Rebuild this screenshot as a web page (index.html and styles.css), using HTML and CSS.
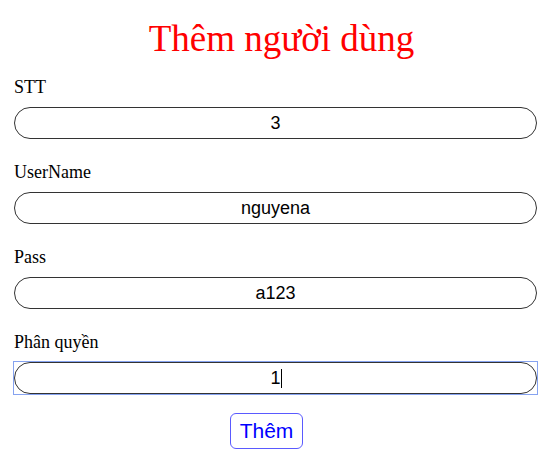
FILE: index.html
```html
<!DOCTYPE html>
<html lang="vi">
<head>
<meta charset="utf-8">
<title>Thêm người dùng</title>
<link rel="stylesheet" href="styles.css">
</head>
<body>
<div class="page">
  <h1 class="title">Thêm người dùng</h1>
  <form class="form">
    <div class="field">
      <label class="label" for="stt">STT</label>
      <input class="input" id="stt" type="text" value="3">
    </div>
    <div class="field">
      <label class="label" for="user">UserName</label>
      <input class="input" id="user" type="text" value="nguyena">
    </div>
    <div class="field">
      <label class="label" for="pass">Pass</label>
      <input class="input" id="pass" type="text" value="a123">
    </div>
    <div class="field field-last">
      <label class="label" for="role">Phân quyền</label>
      <div class="input-wrap">
        <input class="input" id="role" type="text" value="1">
        <span class="caret"></span>
      </div>
    </div>
    <div class="actions">
      <button class="btn" type="button">Thêm</button>
    </div>
  </form>
</div>
</body>
</html>
```
FILE: styles.css
```css
html, body {
  margin: 0;
  padding: 0;
  background: #fff;
}
.page {
  width: 523px;
  padding: 18px 0 0 14px;
  font-family: "Liberation Serif", "Times New Roman", serif;
}
.title {
  margin: 0 0 18px 0;
  font-size: 37px;
  line-height: 41px;
  font-weight: normal;
  color: #ff0000;
  text-align: center;
  padding-left: 12px;
}
.form {
  display: flex;
  flex-direction: column;
}
.field {
  display: flex;
  flex-direction: column;
  margin-bottom: 23px;
}
.field-last {
  margin-bottom: 19px;
}
.label {
  font-size: 18px;
  line-height: 21px;
  color: #000;
  margin-bottom: 9px;
}
.input-wrap {
  position: relative;
  height: 32px;
  outline: 1px solid #86a3f0;
}
.input {
  display: block;
  box-sizing: border-box;
  width: 523px;
  height: 32px;
  margin: 0;
  padding: 0 10px;
  border: 1px solid #333;
  border-radius: 16px;
  background: #fff;
  font-family: "Liberation Sans", Arial, sans-serif;
  font-size: 18px;
  color: #000;
  text-align: center;
  outline: none;
}
.caret {
  position: absolute;
  left: 267px;
  top: 7px;
  width: 1px;
  height: 19px;
  background: #000;
}
.actions {
  display: flex;
  padding-left: 216px;
}
.btn {
  box-sizing: border-box;
  width: 73px;
  height: 36px;
  padding: 0;
  border: 1px solid #5a5aff;
  border-radius: 6px;
  background: #fff;
  color: #0000ff;
  font-family: "Liberation Sans", Arial, sans-serif;
  font-size: 21px;
  cursor: pointer;
}
```
